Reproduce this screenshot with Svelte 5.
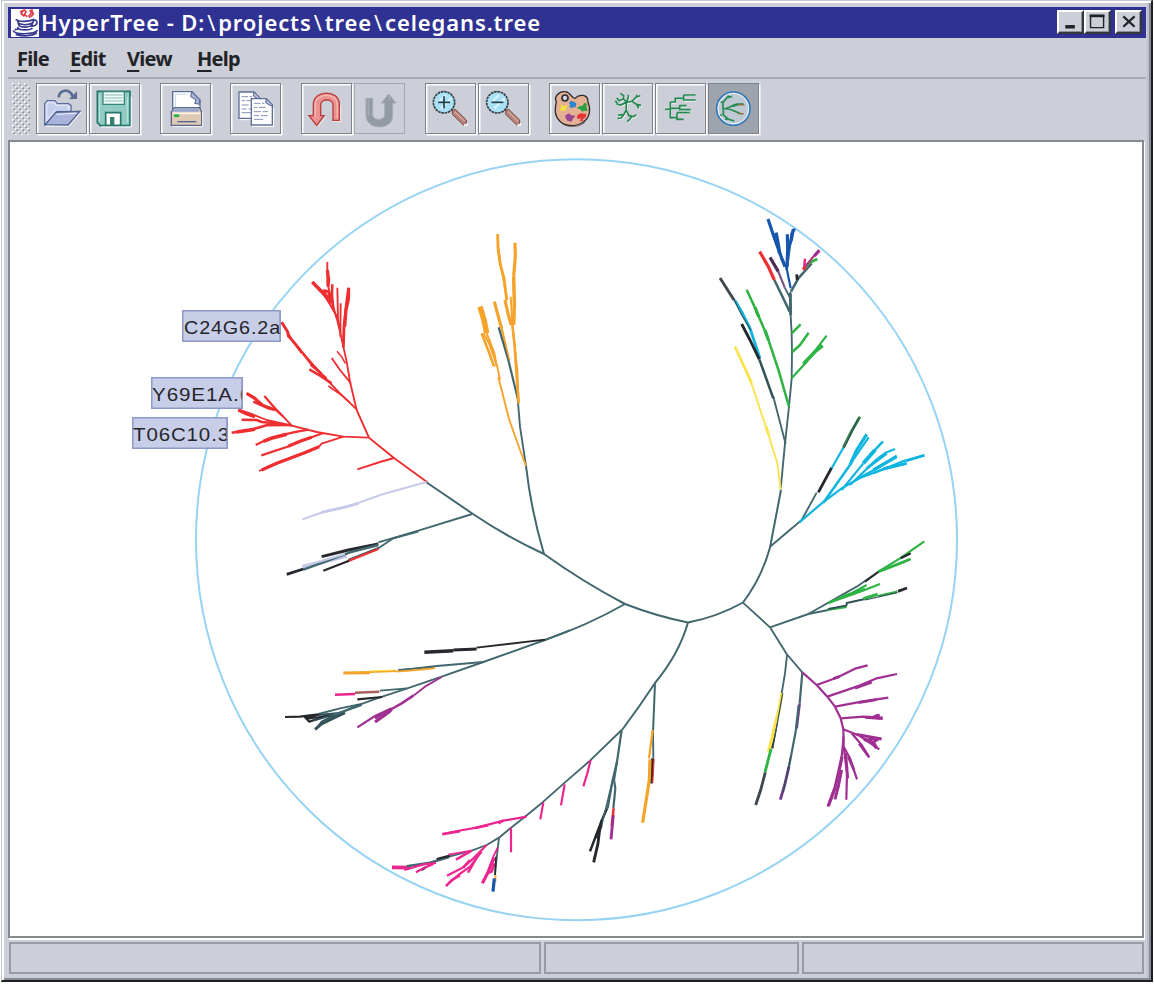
<script>
  const T = '#42676e', R = '#ee2e31', O = '#f5a32b', G = '#2fb344', C = '#0fb5df', P = '#9f3092',
    K = '#25282c', M = '#ec268f', B = '#1856ad', L = '#c6cae8', Y = '#fae34b', D = '#315057';

  const menus = [
    { k: 'F', rest: 'ile', w: 53 },
    { k: 'E', rest: 'dit', w: 57 },
    { k: 'V', rest: 'iew', w: 70 },
    { k: 'H', rest: 'elp', w: 60 }
  ];

  // Each button icon is drawn on a grid three times finer than the screen.
  const groups = [
    [{ id: 'open', vx: 108 }, { id: 'save', vx: 267 }],
    [{ id: 'print', vx: 477 }],
    [{ id: 'copy', vx: 690 }],
    [{ id: 'undo', vx: 903 }, { id: 'redo', vx: 1062, off: true }],
    [{ id: 'zoomin', vx: 105 }, { id: 'zoomout', vx: 264 }],
    [{ id: 'palette', vx: 477 }, { id: 'radial', vx: 636 }, { id: 'rect', vx: 796 }, { id: 'hyper', vx: 956, on: true }]
  ];

  // Branches: colour, width, points. Every cluster has its own origin and a 1/3 scale.
  const clusters = [
    { x: 120, y: 240, b: [
      [R, 5, '922,727 822,654 747,593'], [R, 5, '822,654 780,666 712,688'],
      [R, 5, '747,593 710,510 690,425 680,365 670,320'],
      [R, 5, '670,320 660,275 648,225 628,190 605,155 577,126'], [R, 10, '577,126 600,150 620,170 632,190'],
      [R, 8, '630,190 626,155 612,152 620,175'],
      [R, 5, '650,235 640,200 622,130 622,66'], [R, 9, '622,90 626,120 624,140'], [R, 7, '637,133 636,165 640,205'],
      [R, 5, '652,143 654,240 662,275'], [R, 5, '662,190 661,290'], [R, 8, '670,322 672,260 679,195 686,143'], [R, 9, '686,145 685,180 678,210 674,260'],
      [R, 5, '693,430 660,390 635,354'], [R, 4, '676,370 666,352 651,334'],
      [R, 5, '710,508 660,460 600,398 545,335 515,298 485,247'], [R, 8, '485,247 503,275 505,288 520,305 540,330 545,338'],
      [R, 7, '545,335 572,370 605,402'], [R, 7, '568,388 600,407 635,430'], [R, 5, '572,375 620,415'], [R, 4, '625,438 665,466 690,488'],
      [R, 5, '747,593 670,590 590,576 515,557 470,550'],
      [R, 5, '515,557 490,530 465,508 430,495 380,460'], [R, 9, '380,460 405,475 425,495'], [R, 7, '400,485 445,505 465,510'],
      [R, 6, '433,468 465,505 490,530'], [R, 5, '515,557 440,540 390,520 355,508'], [R, 9, '355,510 380,522 405,530'],
      [R, 7, '365,539 410,540 425,546 495,553'], [R, 7, '335,578 390,570 440,556 515,555'], [R, 10, '350,576 405,568'],
      [R, 6, '565,569 520,577 450,594 407,615'], [R, 10, '430,604 460,593 500,583'],
      [R, 6, '610,579 550,601 500,621 424,646'], [R, 9, '505,619 540,604 575,592'],
      [R, 5, '670,590 605,611 595,622 500,660 417,693'], [R, 9, '425,690 470,670 510,655 550,640 597,620']
    ]},
    { x: 270, y: 460, b: [
      [L, 5, '470,66 340,102 250,134 160,156 97,178'], [L, 8, '155,157 220,143 265,130'],
      [T, 5, '607,162 445,212 325,247'], [T, 5, '445,215 370,235 325,265 235,300'],
      [L, 12, '230,287 160,305 97,321'], [K, 8, '325,252 235,270 155,290'], [T, 7, '325,255 240,277 160,307 100,329'], [L, 6, '225,282 155,303 98,318'],
      [K, 8, '100,327 50,343'], [T, 4, '325,263 235,299'], [R, 6, '325,267 235,303'], [K, 6, '237,302 160,332'],
      [T, 5, '900,510 825,540 640,606 515,650 412,685 330,712 275,732 210,745 145,762'],
      [K, 5, '825,539 620,563'], [K, 8, '620,567 550,570'], [K, 10, '550,572 463,577'],
      [T, 5, '640,606 500,618 385,631'], [O, 5, '495,624 440,630 380,635'], [T, 3, '490,621 385,629'], [O, 5, '380,633 300,636'], [Y, 3, '375,630 300,633'], [O, 9, '300,638 220,639'],
      [T, 5, '412,685 330,692'], ['#a8605c', 7, '328,695 255,698'], [M, 7, '255,702 195,704'],
      [K, 6, '337,711 262,718'], [P, 5, '515,651 465,680 430,707'], [P, 7, '430,707 395,730 365,747 355,760'], [P, 6, '365,745 315,768 262,802'], [P, 9, '365,748 345,765 315,786'], [P, 7, '360,748 315,775'],
      [K, 6, '145,763 90,770 45,771'], [K, 6, '150,764 105,772 118,785 165,768'], [K, 4, '140,766 110,778 185,764'], [D, 5, '275,732 210,758 155,785 137,809'], [D, 8, '225,758 190,775 155,792 135,808'], [D, 5, '145,765 215,758 130,782'], [T, 5, '275,735 190,765']
    ]},
    { x: 440, y: 220, b: [
      [T, 5, '258,738 240,620 233,535'],
      [O, 5, '258,738 240,690 208,600 175,472'], [O, 16, '120,260 132,300 140,340'], [O, 7, '125,340 150,405 162,440'], [O, 6, '140,340 163,400 170,440'], [O, 5, '130,340 147,370 172,440 180,480'],
      [O, 9, '163,245 175,290 185,325'], [O, 6, '185,325 207,420'], [T, 6, '176,322 205,420 233,535'], [O, 2.5, '187,335 208,420'],
      [O, 8, '173,42 174,85 180,130 192,175 200,240'], [O, 5, '175,80 183,140 202,240'], [O, 9, '195,240 205,285 214,315'], [O, 5, '212,230 217,310 232,450 236,550'],
      [O, 9, '225,68 226,110 221,170'], [O, 10, '221,170 223,250 221,315'], [O, 7, '217,315 224,380 230,470 236,550']
    ]},
    { x: 690, y: 200, b: [
      [T, 5, '272,868 285,730 297,620 305,535 306,460 305,400 301,330 301,275'], [T, 8, '302,345 301,280'],
      [Y, 5, '272,868 262,790 234,700 186,555 135,440'], [Y, 8, '236,705 228,680'], [Y, 7, '186,550 135,440'],
      [T, 5, '287,732 250,590'], [D, 7, '250,595 208,478'], [C, 8, '210,475 180,385 155,335 134,300'], [K, 8, '208,478 180,420 155,372'], [D, 3, '182,390 155,345 130,295'], ['#3e474b', 8, '132,300 90,234'],
      [G, 7, '297,620 266,512 232,410 198,330 170,269'], [G, 9, '235,420 225,390'], [G, 9, '206,350 195,322'],
      [G, 6, '305,535 350,485 410,407'], [G, 10, '340,492 375,455 398,437'], [G, 7, '305,458 330,435 356,398'], [G, 7, '305,400 332,373'],
      [T, 7, '299,335 275,285 253,240'], [R, 9, '253,240 235,200 209,155'], [T, 5, '301,295 284,262'], ['#775487', 6, '284,262 265,215'], ['#492d56', 9, '265,215 240,172'],
      [B, 6, '302,265 290,205 267,155'], [B, 9, '285,200 275,175 268,155 250,105 234,57'], [B, 10, '269,160 263,125 258,98'],
      [B, 7, '290,210 297,155 305,100 315,86'], [B, 9, '291,200 293,150 292,103'], [B, 9, '292,150 304,120 310,87'],
      [T, 7, '303,275 325,235 365,190'], [K, 8, '320,223 322,240'], [G, 8, '340,207 355,190 382,177'], ['#a43d79', 6, '340,207 370,170 388,151'], [M, 7, '342,208 345,176'], [R, 8, '340,210 346,200'], [P, 9, '373,168 388,151']
    ]},
    { x: 740, y: 400, b: [
      [T, 5, '90,440 185,360 230,278'], [K, 8, '235,277 275,203'], [C, 6, '275,205 310,143'], ['#398047', 8, '310,143 335,93 360,50'], [D, 3, '312,145 355,55'],
      [C, 6, '178,367 245,310 305,265 360,234 430,208 500,190'], [C, 7, '250,308 330,195'], [C, 9, '330,195 350,150 380,103'], [C, 6, '332,190 386,112'],
      [C, 6, '305,270 370,190'], [C, 11, '370,190 405,150'], [C, 7, '395,160 429,124'], [C, 6, '330,255 410,178 437,158 465,147'], [C, 8, '380,205 440,160'], [C, 6, '350,238 420,200 470,167'], [C, 9, '400,210 470,170'], [C, 6, '400,220 485,185 553,166'], [C, 7, '500,182 553,166'], [C, 8, '430,206 500,190'],
      [T, 5, '90,682 205,642 350,560 415,515'], [K, 5, '375,545 418,514'], [G, 6, '415,515 480,475 553,424'], [K, 6, '482,475 512,460'], [G, 8, '415,515 480,490 512,477'],
      [G, 6, '265,609 335,580 380,555'], [G, 6, '265,609 360,575 420,552'], [G, 8, '300,592 375,568'],
      [T, 5, '205,642 265,630'], [G, 7, '263,629 320,620'], [D, 5, '265,627 320,616 320,609 375,597'], [G, 9, '370,596 413,583'], [G, 6, '413,588 472,575'], [D, 3, '375,600 472,578'], [K, 8, '474,574 501,564']
    ]},
    { x: 730, y: 590, b: [
      [T, 5, '38,37 120,112 170,192 217,247'],
      [T, 5, '171,195 165,250 155,310'], [K, 6, '140,400 126,475'], [Y, 9, '156,310 148,355 136,400 125,450 115,485'], [D, 3, '158,310 142,400 128,475'], [G, 8, '123,477 105,547'], ['#3d4850', 8, '106,547 92,600 77,645'],
      [T, 6, '217,247 209,340'], ['#703b87', 7, '209,340 200,415'], [T, 6, '206,345 197,425 177,530'], ['#703b87', 8, '177,530 164,585 151,629'], [D, 3, '182,500 160,605'],
      [P, 6, '217,247 260,285 292,320 315,350 332,385 340,418 341,470'], [P, 6, '260,285 320,263 375,236 413,226'], [P, 8, '310,266 328,260'],
      [P, 6, '292,320 380,290 440,265 501,252'], [P, 9, '375,294 425,276'], [P, 6, '315,350 395,335 475,323'], [P, 8, '385,338 440,329'],
      [P, 6, '332,385 400,380 458,383'], [P, 8, '405,382 458,386'], [P, 9, '430,382 445,376 443,388'],
      [P, 6, '340,418 390,438 448,478'], [P, 8, '380,433 455,447'], [P, 10, '402,447 430,458 440,475'], [P, 7, '415,448 448,446 428,458'], [P, 6, '365,430 395,465 418,503'], [P, 8, '388,461 415,498'],
      [P, 6, '341,470 360,505 381,568'], [P, 8, '355,500 372,540'], [P, 6, '341,470 351,550 349,629'], [P, 8, '347,490 353,565'],
      [P, 6, '341,440 333,520 315,590 293,650'], [P, 9, '336,500 325,550 315,595 295,648'], [P, 8, '335,540 325,590 315,628']
    ]},
    { x: 380, y: 730, b: [
      [T, 5, '725,0 630,92 555,157 490,215 435,260 393,293 357,323 320,345 275,362 207,380'],
      [M, 6, '632,90 622,130 610,169'], [M, 6, '554,163 543,226'], [M, 6, '490,217 481,268'], [M, 6, '393,293 393,367'],
      [M, 6, '440,260 370,272 290,293 232,303 187,312'], [M, 7, '187,313 240,304'], [M, 7, '285,294 325,286'], [M, 7, '355,280 370,271'],
      [M, 11, '36,412 90,413'], [T, 7, '207,381 150,398 80,409'], [K, 6, '210,377 170,387'], [M, 5, '275,362 205,374'], [M, 7, '275,362 228,389'], [M, 6, '73,420 130,403 168,399'], [K, 6, '140,410 125,420'], [M, 6, '108,427 130,415 160,402'],
      [M, 6, '320,345 280,385 250,412 201,437'], [M, 7, '270,390 250,412'], [M, 6, '305,365 270,410 235,435 198,468'], [M, 7, '240,436 215,450 198,468'], [M, 7, '292,378 280,400 264,428'],
      [T, 5, '357,323 351,375 345,435'], [M, 5, '353,353 340,380 323,425'], [M, 9, '343,383 325,425 307,460'], [M, 7, '344,400 335,425 320,430'], [K, 4, '348,380 345,435'], [O, 5, '347,435 346,455'], [B, 9, '343,445 339,485'],
      [T, 6, '725,0 711,95 698,150 683,235'], [T, 6, '711,95 702,150 706,175 700,235'], [R, 7, '701,235 695,287'], [P, 8, '700,255 693,328'], [K, 7, '681,235 662,280 630,364'], [T, 4, '698,150 664,290'], [K, 5, '664,270 664,290 650,325'], [K, 8, '660,290 654,340 641,397'],
      [T, 5, '819,0 820,85'], [O, 6, '818,0 807,85'], [K, 9, '818,85 814,160'], [R, 3, '822,88 818,158'], [O, 9, '810,88 808,150 788,278']
    ]}
  ];

  const tags = [
    { x: 182, y: 310, w: 99, t: 'C24G6.2a', tx: 2, tw: 97 },
    { x: 151, y: 377, w: 92, t: 'Y69E1A.6', tx: 1, tw: 100 },
    { x: 132, y: 417, w: 96, t: 'T06C10.3', tx: 1, tw: 97 }
  ];
</script>

{#snippet lens(dx, plus)}
  <g transform="translate({dx} 0)">
    <path d="M187 331l9-3 33 32v12l-9 3-33-32z" fill="#b58178" stroke="#764b47" stroke-width="3"/>
    <path d="M194 335l30 29" stroke="#d5aaa0" stroke-width="4"/>
    <path d="M222 375h9v-5" fill="none" stroke="#fff" stroke-width="4"/>
    <circle cx="162" cy="307" r="32" fill="#a9e0f3" stroke="#333e46" stroke-width="5" stroke-dasharray="8 2"/>
    <path d="M143 309l24-24M153 325l31-31" stroke="#d6f4fb" stroke-width="7"/>
    <path d="M144 307h36" stroke="#263d47" stroke-width="5"/>
    {#if plus}<path d="M162 289v36" stroke="#263d47" stroke-width="5"/>{/if}
  </g>
{/snippet}

{#snippet icon(id)}
  {#if id === 'open'}
    <path d="M134 374v-63l8-9h23l7 9h34l7 6v17h-43l-35 41z" fill="#dfe3f5" stroke="#596b9c" stroke-width="4"/>
    <path d="M142 350v-35l5-5h14l7 9h35v10h-39l-22 27z" fill="#c5cdec"/>
    <path d="M136 374l31-37 73-3-36 41z" fill="#a9b4dd" stroke="#50628e" stroke-width="4"/>
    <path d="M170 343l58-3M137 379h70l36-43" fill="none" stroke="#f2f4fc" stroke-width="3"/>
    <path d="M176 292c3-25 33-27 42-3" fill="none" stroke="#5b6c92" stroke-width="8"/>
    <path d="M207 297h24v-23z" fill="#5b6c92"/>
  {:else if id === 'save'}
    <path d="M292 274h98v103h-89l-9-9z" fill="#91cbc1" stroke="#25776c" stroke-width="5"/>
    <path d="M309 275h64v38h-64z" fill="#f0faf7" stroke="#37867b" stroke-width="4"/>
    <path d="M314 285h54M314 294h54M314 303h54" stroke="#8abdb5" stroke-width="3"/>
    <path d="M317 338h45v38h-45z" fill="#fff" stroke="#25776c" stroke-width="5"/>
    <path d="M330 351h13v25h-13z" fill="#347e74"/>
    <path d="M299 283v80M382 292v77" stroke="#bce6de" stroke-width="3"/>
    <path d="M304 381h90v-91" fill="none" stroke="#fff" stroke-width="3"/>
  {:else if id === 'print'}
    <path d="M515 331v-56h58l24 25v31z" fill="#fff" stroke="#596b99" stroke-width="4"/>
    <path d="M572 275l-3 15 16 9-4 11 15 3v-14l-13-12z" fill="#aab5d6" stroke="#51628c" stroke-width="3"/>
    <path d="M523 323v-40h34" fill="none" stroke="#cdd6ef" stroke-width="3"/>
    <path d="M511 336l9-13h75l7 13v40h-91z" fill="#dfcab5" stroke="#5c668a" stroke-width="4"/>
    <path d="M520 325h73v10h-81z" fill="#98a7d0"/>
    <path d="M516 340h82" stroke="#fff1e5" stroke-width="5"/>
    <path d="M519 343h16v8h-16z" fill="#26b34b"/>
    <path d="M529 365h57" stroke="#53618e" stroke-width="4"/>
    <path d="M514 380h91v-45" fill="none" stroke="#f6f7fb" stroke-width="3"/>
  {:else if id === 'copy'}
    {#each [[0, 0], [37, 20]] as [dx, dy]}
      <g transform="translate({dx} {dy})">
        <path d="M717 276h45l18 19v60h-63z" fill="#fff" stroke="#5f7096" stroke-width="4"/>
        <path d="M762 276l-2 12 13 8 7 2v-4z" fill="#b4bfda" stroke="#52648d" stroke-width="3"/>
        <path d="M725 290h19m5 0h7M725 302h11m4 0h20M725 315h21m5 0h16M725 327h15m6 0h20M725 338h28" stroke="#8391b7" stroke-width="3"/>
        <path d="M719 359h65v-55" fill="none" stroke="#fff" stroke-width="3"/>
      </g>
    {/each}
  {:else if id === 'undo'}
    <path d="M940 347v-34c0-44 78-46 78 0v48h-19v-46c0-20-37-20-37 0v32h10l-22 29-23-29z" fill="#eb9290" stroke="#b93d3c" stroke-width="4"/>
    <path d="M946 350v-37c0-35 64-37 66 0v42" fill="none" stroke="#f7bab3" stroke-width="4"/>
    <path d="M954 380l23-29M998 365h24v-48" fill="none" stroke="#f6e6e8" stroke-width="3"/>
  {:else if id === 'redo'}
    <path d="M1098 295h20v49c0 19 36 19 36 0v-35h-10l22-27 22 27h-10v38c0 46-80 44-80 0z" fill="#929aa3" stroke="#a7adb5" stroke-width="3"/>
    <path d="M1105 299v49M1168 287v15" stroke="#a5acb4" stroke-width="4"/>
  {:else if id === 'zoomin'}
    {@render lens(0, true)}
  {:else if id === 'zoomout'}
    {@render lens(160, false)}
  {:else if id === 'palette'}
    <path d="M509 363c-20-21-12-43-10-58-8-13 7-32 26-30 19 1 18 21 30 20 12-13 40-14 39 12 13 32-2 56-24 65-17 8-45 7-61-9z" fill="#e4b195" stroke="#2d2d2d" stroke-width="4"/>
    <circle cx="525" cy="294" r="9" fill="#d3d8e3" stroke="#292c30" stroke-width="5"/>
    <path d="M511 313l8 6 13-4-3 10-4 9-7-2-9-3 4-6z" fill="#f1e33a"/>
    <path d="M537 309l6-7 8 3 8 5-2 11-14 3-6-5 4-4z" fill="#2f85cf"/>
    <path d="M568 319l10-2 5-9 8 4-2 7 4 14-11-1-4 3-9-8-9-2z" fill="#27a145"/>
    <path d="M525 347l11-7 8 6 12 1-7 9-5 9-12-3-5-7z" fill="#9b4596"/>
    <path d="M561 347l10-7 18 2-2 10-9 6 3 4-12 1 4-8-11 2z" fill="#e73434"/>
    <path d="M518 372c20 13 53 9 67-5" fill="none" stroke="#6d5145" stroke-width="2"/>
  {:else if id === 'radial'}
    <path d="M691 280l10 7v9l-13 6-8-8M701 297l8 10-17 8-12-3m-4-10l7 9M709 307l17-3 14-14v-6m0 7l11-4M726 304l15 10 12 2m-12-2l5 11M709 307l6-14v-9M709 307v23l-8 14-17 1m17 0l-8 9-10 1m26-24l8 16 14 3 8-6m-13 5l-7 9-7 7" fill="none" stroke="#fff" stroke-width="3" transform="translate(3 3)"/>
    <path d="M691 280l10 7v9l-13 6-8-8M701 297l8 10-17 8-12-3m-4-10l7 9M709 307l17-3 14-14v-6m0 7l11-4M726 304l15 10 12 2m-12-2l5 11M709 307l6-14v-9M709 307v23l-8 14-17 1m17 0l-8 9-10 1m26-24l8 16 14 3 8-6m-13 5l-7 9-7 7" fill="none" stroke="#23884e" stroke-width="5"/>
  {:else if id === 'rect'}
    <path d="M829 331h17M844 309v44h18m-18-44h15v-11h24M883 286v17h35m-35-17h35M846 327h24m0-11v16h33m-33-12h22M862 341v18h20m-20-18h38" fill="none" stroke="#fff" stroke-width="3"/>
    <path d="M826 328h17M842 306v47h18m-18-47h15v-11h25M882 285v15h36m-36-15h36M844 325h26m0-10v14h33m-33-12h21M862 338v20h20m-20-20h38" fill="none" stroke="#23884e" stroke-width="5"/>
  {:else}
    <circle cx="1032" cy="326" r="50" fill="#bec9d3" stroke="#2e78bb" stroke-width="5"/>
    <circle cx="1032" cy="326" r="46" fill="none" stroke="#edf7fd" stroke-width="3"/>
    <path d="M1000 327c16 0 24-10 43-15h20m-52 15c16-2 31 12 49 15M1001 327v-20l12-14 15-4m-16 4l7-6m-18 20l-7-1m8 20v19l16 13 17 5m-20-5l-8-1m-9-12l-6 0M1032 319l17-7m-18 20l20 7" fill="none" stroke="#278b51" stroke-width="5"/>
    <path d="M1045 315h21M1045 341h18" stroke="#a56028" stroke-width="3"/>
  {/if}
{/snippet}

<div class="window">
  <header>
    <svg class="java" viewBox="33 25 84 84">
      <path fill="#fff" d="M33 25h84v84H33z"/>
      <path d="M60 34l9-4-5 10 9 7M73 27l5 7-5 8 9 6M88 29l6 3-2 8-5 6 4 5M96 26v7l4 6-7 9" fill="none" stroke="#dd3745" stroke-width="5"/>
      <path d="M47 56c12 9 43 7 56 0M53 60l4 15c9 7 29 5 38-1l7-17M98 58c19-2 17 18-5 19M54 79c-4 12 40 10 43 3M40 89c2 14 63 13 73 0M44 87l11-2M47 101c22 7 48 6 64-4M55 68c12 6 30 5 42-1" fill="none" stroke="#383a8e" stroke-width="5"/>
    </svg>
    <h1>HyperTree - D:<i>\</i>projects<i>\</i>tree<i>\</i>celegans.tree</h1>
    <div class="controls">
      <button aria-label="Minimize"><svg viewBox="0 0 26 23"><path d="M7 15h11v4H7z" fill="#202226"/></svg></button>
      <button aria-label="Maximize"><svg viewBox="0 0 26 23"><path d="M5 4h15v14H5z" fill="none" stroke="#202226" stroke-width="1.6"/><path d="M4 3h17v3H4z" fill="#202226"/></svg></button>
      <button aria-label="Close" class="close"><svg viewBox="0 0 26 23"><path d="M7 5l13 12M20 5L7 17" stroke="#202226" stroke-width="2.5"/></svg></button>
    </div>
  </header>

  <nav>
    {#each menus as m}
      <span style="width:{m.w}px"><u>{m.k}</u>{m.rest}</span>
    {/each}
  </nav>

  <div class="toolbar">
    <svg class="grip" width="18" height="52">
      <defs>
        <pattern id="bumps" width="6" height="6" patternUnits="userSpaceOnUse">
          <path d="M0 0h1.7v1.7H0zM3 3h1.7v1.7H3z" fill="#f8f9fb"/>
          <path d="M1.4 1.4h1.5v1.5H1.4zM4.4 4.4H6V6H4.4z" fill="#858b94"/>
        </pattern>
      </defs>
      <rect width="18" height="52" fill="url(#bumps)"/>
    </svg>
    {#each groups as g}
      <div class="group">
        {#each g as b}
          <button class="tool" class:off={b.off} class:on={b.on} aria-label={b.id}>
            <svg viewBox="{b.vx} 249 153 153">{@render icon(b.id)}</svg>
          </button>
        {/each}
      </div>
    {/each}
  </div>

  <main>
    <svg viewBox="10 142 1131 794">
      <circle cx="576.5" cy="539.7" r="380.5" fill="none" stroke="#97d3f3" stroke-width="2"/>
      <g fill="none" stroke={T} stroke-width="2">
        <path d="M426 482L473 514Q507 537 544 554Q583 582 625 604Q656 616 688 622.5Q717 617 743 602.5Q762 577 770 547.5L781 490"/>
        <path d="M544 554Q531 510 526 466"/>
        <path d="M625 604Q586 626 545 640"/>
        <path d="M688 622.5Q679 654 655 683Q640 706 622 730"/>
        <path d="M655 683L654 708L653 732"/>
      </g>
      {#each clusters as c}
        <g transform="translate({c.x} {c.y}) scale(.33333)" fill="none" stroke-linejoin="round">
          {#each c.b as [color, w, pts]}
            <polyline points={pts} stroke={color} stroke-width={w + 0.6}/>
          {/each}
        </g>
      {/each}
      {#each tags as t}
        <svg x={t.x} y={t.y} width={t.w} height="32" overflow="hidden">
          <rect x=".75" y=".75" width={t.w - 1.5} height="30.5" fill="#c9cee8" stroke="#8d99c7" stroke-width="1.5"/>
          <text x={t.tx} y="23.5" textLength={t.tw} lengthAdjust="spacingAndGlyphs">{t.t}</text>
          <path d="M{t.w - 0.75} 0v32" stroke="#8d99c7" stroke-width="1.5"/>
        </svg>
      {/each}
    </svg>
  </main>

  <footer><div></div><div></div><div></div></footer>
</div>

<style>
  :global(body) { background: #fff; }
  .window {
    box-sizing: border-box;
    width: 1152px;
    height: 982px;
    margin-left: 1px;
    padding: 3px 3px 5px 4px;
    display: flex;
    flex-direction: column;
    background: #cccfd8;
    border: solid;
    border-width: 1px 2px 2px 1px;
    border-color: #c3c7cf #1e2024 #1e2024 #c3c7cf;
    box-shadow: inset 2px 2px #fff, inset -2px -2px #858b96, inset -4px 0 #bbc0c9;
  }
  header {
    flex: none;
    height: 31px;
    margin: 3px 2px 0 2px;
    display: flex;
    align-items: center;
    background: #2f3292;
    color: #fff;
  }
  .java { width: 28px; height: 28px; margin-left: 3px; }
  h1 {
    margin: -2px 0 0 2px;
    font: 600 22px "Noto Sans", sans-serif;
    letter-spacing: .88px;
    white-space: pre;
  }
  h1 i { padding: 0 2px; font-style: normal; font-weight: 400; }
  .controls { display: flex; margin: -1px 4px 0 auto; }
  .controls button {
    box-sizing: border-box;
    width: 27px;
    height: 24px;
    padding: 0;
    background: #cccfd8;
    border: solid;
    border-width: 2px;
    border-color: #fff #33363c #33363c #fff;
    box-shadow: inset -1px -1px #8b919a;
  }
  .controls .close { margin-left: 4px; }
  .controls svg { display: block; width: 23px; height: 20px; }
  nav {
    flex: none;
    box-sizing: border-box;
    height: 41px;
    margin: 0 2px;
    padding: 7px 0 0 9px;
    display: flex;
    border-bottom: 2px solid #a7adb7;
    color: #222327;
    font: 700 20px/28px "Noto Sans", sans-serif;
    letter-spacing: -.7px;
  }
  nav u { text-decoration-thickness: 1.5px; text-underline-offset: 4px; text-decoration-skip-ink: none; }
  .toolbar {
    flex: none;
    height: 57px;
    padding: 4px 0 0 6px;
    display: flex;
    gap: 19.8px;
  }
  .grip { margin-right: -14px; }
  .group { display: flex; gap: 2px; }
  .tool {
    box-sizing: border-box;
    width: 51px;
    height: 51px;
    padding: 0;
    border: 1.5px solid #7e838b;
    background: #cccfd8;
    box-shadow: inset 1.5px 1.5px #fff, 1.5px 1.5px #fff;
  }
  .tool svg { display: block; width: 51px; height: 51px; margin: -1px; }
  .tool.off { border-color: #a2a9b2; box-shadow: none; }
  .tool.on { background: #9da4ad; box-shadow: 1.5px 1.5px #fff; }
  main {
    flex: none;
    box-sizing: border-box;
    height: 798px;
    margin: 0 4px 0 2px;
    border: 2px solid #858a90;
    background: #fff;
    box-shadow: 1px 2px #fff;
  }
  main svg { display: block; }
  main > svg { width: 1131px; height: 794px; }
  text { font: 18.5px "Liberation Sans", sans-serif; letter-spacing: .8px; fill: #25262b; }
  footer {
    height: 32px;
    margin: 4px 4px 0 3px;
    display: grid;
    grid-template-columns: 532px 255px 1fr;
    gap: 3px;
  }
  footer div { box-sizing: border-box; height: 32px; border: 2px solid #969ca6; }
</style>
